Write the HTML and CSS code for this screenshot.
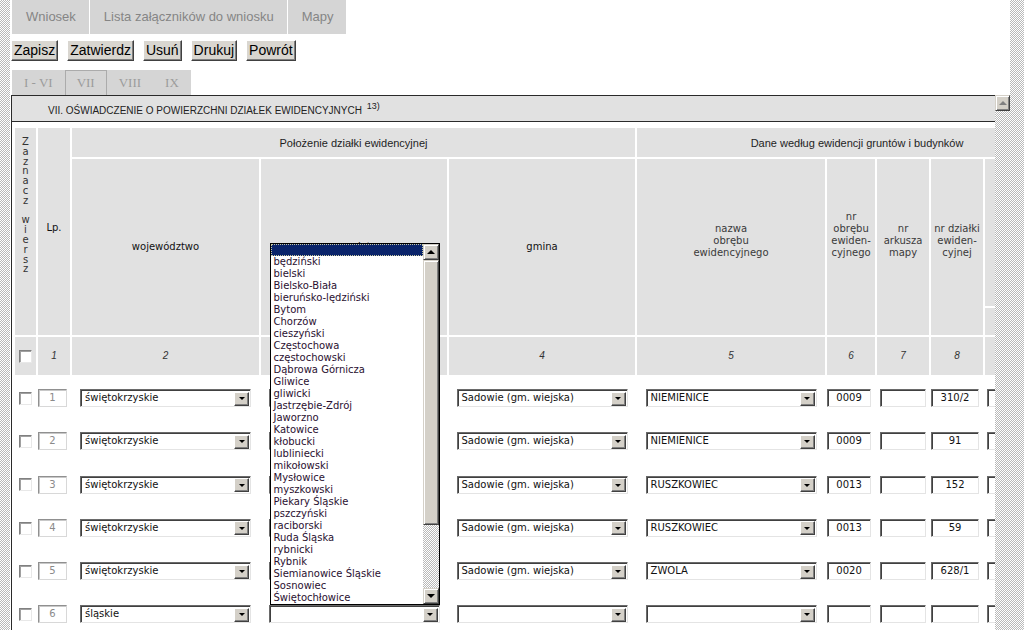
FILE: index.html
```html
<!DOCTYPE html>
<html lang="pl">
<head>
<meta charset="utf-8">
<title>Wniosek</title>
<link rel="stylesheet" href="styles.css">
</head>
<body>
<div class="dither frame-left"></div>
<div class="main">
  <nav class="tabs">
    <div class="tab">Wniosek</div>
    <div class="tab">Lista załączników do wniosku</div>
    <div class="tab">Mapy</div>
  </nav>
  <div class="actions">
    <button class="btn">Zapisz</button>
    <button class="btn">Zatwierdz</button>
    <button class="btn">Usuń</button>
    <button class="btn">Drukuj</button>
    <button class="btn">Powrót</button>
  </div>
  <div class="subtabs">
    <div class="subtab">I - VI</div>
    <div class="subtab active">VII</div>
    <div class="subtab">VIII</div>
    <div class="subtab">IX</div>
  </div>
  <div class="panel">
    <div class="pane">
      <div class="pane-title">VII. OŚWIADCZENIE O POWIERZCHNI DZIAŁEK EWIDENCYJNYCH <sup>13)</sup></div>
      <table class="grid">
        <colgroup>
          <col class="w-chk"><col class="w-lp"><col class="w-woj"><col class="w-pow"><col class="w-gm"><col class="w-obr"><col class="w-nro"><col class="w-ark"><col class="w-dz"><col class="w-last">
        </colgroup>
        <thead>
          <tr class="h1">
            <th rowspan="3" class="hv vert">Z<br>a<br>z<br>n<br>a<br>c<br>z<br><br>w<br>i<br>e<br>r<br>s<br>z</th>
            <th rowspan="3" class="hv lp-h">Lp.</th>
            <th colspan="3" class="ha">Położenie działki ewidencyjnej</th>
            <th colspan="5" class="ha">Dane według ewidencji gruntów i budynków</th>
          </tr>
          <tr class="h2a">
            <th rowspan="2" class="hv dark">województwo</th>
            <th rowspan="2" class="hv dark">powiat</th>
            <th rowspan="2" class="hv dark">gmina</th>
            <th rowspan="2" class="hv pb12">nazwa<br>obrębu<br>ewidencyjnego</th>
            <th rowspan="2" class="hv pb24">nr<br>obrębu<br>ewiden-<br>cyjnego</th>
            <th rowspan="2" class="hv pb12">nr<br>arkusza<br>mapy</th>
            <th rowspan="2" class="hv pb12">nr działki<br>ewiden-<br>cyjnej</th>
            <th class="hv"></th>
          </tr>
          <tr class="h2b">
            <th class="hv"></th>
          </tr>
          <tr class="h3">
            <th><span class="chk"></span></th>
            <th class="num">1</th>
            <th class="num">2</th>
            <th class="num">3</th>
            <th class="num">4</th>
            <th class="num">5</th>
            <th class="num">6</th>
            <th class="num">7</th>
            <th class="num">8</th>
            <th class="num"></th>
          </tr>
        </thead>
        <tbody>
          <tr class="row">
            <td class="c"><span class="chk"></span></td>
            <td><span class="lp">1</span></td>
            <td class="c"><span class="sel"><span class="sel-val">świętokrzyskie</span><span class="abtn"><i class="tri-down"></i></span></span></td>
            <td class="c"><span class="sel"><span class="sel-val">opatowski</span><span class="abtn"><i class="tri-down"></i></span></span></td>
            <td class="c"><span class="sel"><span class="sel-val">Sadowie (gm. wiejska)</span><span class="abtn"><i class="tri-down"></i></span></span></td>
            <td class="c"><span class="sel"><span class="sel-val">NIEMIENICE</span><span class="abtn"><i class="tri-down"></i></span></span></td>
            <td><span class="txt w44">0009</span></td>
            <td class="c"><span class="txt w46"></span></td>
            <td><span class="txt w48">310/2</span></td>
            <td><span class="txt w46 ml2"></span></td>
          </tr>
          <tr class="row">
            <td class="c"><span class="chk"></span></td>
            <td><span class="lp">2</span></td>
            <td class="c"><span class="sel"><span class="sel-val">świętokrzyskie</span><span class="abtn"><i class="tri-down"></i></span></span></td>
            <td class="c"><span class="sel"><span class="sel-val">opatowski</span><span class="abtn"><i class="tri-down"></i></span></span></td>
            <td class="c"><span class="sel"><span class="sel-val">Sadowie (gm. wiejska)</span><span class="abtn"><i class="tri-down"></i></span></span></td>
            <td class="c"><span class="sel"><span class="sel-val">NIEMIENICE</span><span class="abtn"><i class="tri-down"></i></span></span></td>
            <td><span class="txt w44">0009</span></td>
            <td class="c"><span class="txt w46"></span></td>
            <td><span class="txt w48">91</span></td>
            <td><span class="txt w46 ml2"></span></td>
          </tr>
          <tr class="row">
            <td class="c"><span class="chk"></span></td>
            <td><span class="lp">3</span></td>
            <td class="c"><span class="sel"><span class="sel-val">świętokrzyskie</span><span class="abtn"><i class="tri-down"></i></span></span></td>
            <td class="c"><span class="sel"><span class="sel-val">opatowski</span><span class="abtn"><i class="tri-down"></i></span></span></td>
            <td class="c"><span class="sel"><span class="sel-val">Sadowie (gm. wiejska)</span><span class="abtn"><i class="tri-down"></i></span></span></td>
            <td class="c"><span class="sel"><span class="sel-val">RUSZKOWIEC</span><span class="abtn"><i class="tri-down"></i></span></span></td>
            <td><span class="txt w44">0013</span></td>
            <td class="c"><span class="txt w46"></span></td>
            <td><span class="txt w48">152</span></td>
            <td><span class="txt w46 ml2"></span></td>
          </tr>
          <tr class="row">
            <td class="c"><span class="chk"></span></td>
            <td><span class="lp">4</span></td>
            <td class="c"><span class="sel"><span class="sel-val">świętokrzyskie</span><span class="abtn"><i class="tri-down"></i></span></span></td>
            <td class="c"><span class="sel"><span class="sel-val">opatowski</span><span class="abtn"><i class="tri-down"></i></span></span></td>
            <td class="c"><span class="sel"><span class="sel-val">Sadowie (gm. wiejska)</span><span class="abtn"><i class="tri-down"></i></span></span></td>
            <td class="c"><span class="sel"><span class="sel-val">RUSZKOWIEC</span><span class="abtn"><i class="tri-down"></i></span></span></td>
            <td><span class="txt w44">0013</span></td>
            <td class="c"><span class="txt w46"></span></td>
            <td><span class="txt w48">59</span></td>
            <td><span class="txt w46 ml2"></span></td>
          </tr>
          <tr class="row">
            <td class="c"><span class="chk"></span></td>
            <td><span class="lp">5</span></td>
            <td class="c"><span class="sel"><span class="sel-val">świętokrzyskie</span><span class="abtn"><i class="tri-down"></i></span></span></td>
            <td class="c"><span class="sel"><span class="sel-val">opatowski</span><span class="abtn"><i class="tri-down"></i></span></span></td>
            <td class="c"><span class="sel"><span class="sel-val">Sadowie (gm. wiejska)</span><span class="abtn"><i class="tri-down"></i></span></span></td>
            <td class="c"><span class="sel"><span class="sel-val">ZWOLA</span><span class="abtn"><i class="tri-down"></i></span></span></td>
            <td><span class="txt w44">0020</span></td>
            <td class="c"><span class="txt w46"></span></td>
            <td><span class="txt w48">628/1</span></td>
            <td><span class="txt w46 ml2"></span></td>
          </tr>
          <tr class="row">
            <td class="c"><span class="chk"></span></td>
            <td><span class="lp">6</span></td>
            <td class="c"><span class="sel"><span class="sel-val">śląskie</span><span class="abtn"><i class="tri-down"></i></span></span></td>
            <td class="c">
              <span class="dd-wrap">
                <span class="sel"><span class="sel-val"></span><span class="abtn"><i class="tri-down"></i></span></span>
                <span class="dropdown">
                  <span class="dd-list">
                    <span class="dd-item selected"></span>
                    <span class="dd-item">będziński</span>
                    <span class="dd-item">bielski</span>
                    <span class="dd-item">Bielsko-Biała</span>
                    <span class="dd-item">bieruńsko-lędziński</span>
                    <span class="dd-item">Bytom</span>
                    <span class="dd-item">Chorzów</span>
                    <span class="dd-item">cieszyński</span>
                    <span class="dd-item">Częstochowa</span>
                    <span class="dd-item">częstochowski</span>
                    <span class="dd-item">Dąbrowa Górnicza</span>
                    <span class="dd-item">Gliwice</span>
                    <span class="dd-item">gliwicki</span>
                    <span class="dd-item">Jastrzębie-Zdrój</span>
                    <span class="dd-item">Jaworzno</span>
                    <span class="dd-item">Katowice</span>
                    <span class="dd-item">kłobucki</span>
                    <span class="dd-item">lubliniecki</span>
                    <span class="dd-item">mikołowski</span>
                    <span class="dd-item">Mysłowice</span>
                    <span class="dd-item">myszkowski</span>
                    <span class="dd-item">Piekary Śląskie</span>
                    <span class="dd-item">pszczyński</span>
                    <span class="dd-item">raciborski</span>
                    <span class="dd-item">Ruda Śląska</span>
                    <span class="dd-item">rybnicki</span>
                    <span class="dd-item">Rybnik</span>
                    <span class="dd-item">Siemianowice Śląskie</span>
                    <span class="dd-item">Sosnowiec</span>
                    <span class="dd-item">Świętochłowice</span>
                  </span>
                  <span class="dd-scroll">
                    <span class="sbtn"><i class="tri-up"></i></span>
                    <span class="thumb"></span>
                    <span class="dither dd-track"></span>
                    <span class="sbtn"><i class="tri-down"></i></span>
                  </span>
                </span>
              </span>
            </td>
            <td class="c"><span class="sel"><span class="sel-val"></span><span class="abtn"><i class="tri-down"></i></span></span></td>
            <td class="c"><span class="sel"><span class="sel-val"></span><span class="abtn"><i class="tri-down"></i></span></span></td>
            <td><span class="txt w44"></span></td>
            <td class="c"><span class="txt w46"></span></td>
            <td><span class="txt w48"></span></td>
            <td><span class="txt w46 ml2"></span></td>
          </tr>
        </tbody>
      </table>
    </div>
    <div class="vscroll">
      <span class="sbtn pane-up"><i class="tri-up grey"></i></span>
      <span class="dither vtrack"></span>
    </div>
  </div>
</div>
<div class="dither frame-right"></div>
</body>
</html>
```

FILE: styles.css
```css
* { box-sizing: border-box; }

html, body {
  margin: 0;
  height: 630px;
  overflow: hidden;
}

body {
  display: flex;
  background: #fff;
  font-family: "Liberation Sans", Arial, sans-serif;
}

.dither {
  background-color: #dcdcdc;
  background-image: conic-gradient(#b9b9b9 0 25%, #fff 0 50%, #b9b9b9 0 75%, #fff 0);
  background-size: 2px 2px;
}

.frame-left { width: 10px; flex: none; }
.frame-right { width: 14px; flex: none; }

.main {
  flex: 1;
  min-width: 0;
  display: flex;
  flex-direction: column;
  padding-left: 1px;
}

/* top tabs */
.tabs {
  display: flex;
  gap: 1px;
  height: 34px;
  margin-left: 1px;
  flex: none;
}

.tab {
  background: #d5d5d5;
  color: #858585;
  font-size: 13px;
  line-height: 34px;
  padding: 0 13px 0 14px;
}

/* action buttons */
.actions {
  display: flex;
  gap: 9px;
  margin-top: 6px;
  height: 21px;
  flex: none;
}

.btn {
  font: 14px/17px "Liberation Sans", Arial, sans-serif;
  color: #000;
  background: #d9d6d0;
  border: 1px solid;
  border-color: #fff #404040 #404040 #fff;
  box-shadow: inset -1px -1px 0 #808080;
  padding: 1px 2px;
  margin: 0;
  height: 21px;
}

/* roman sub tabs */
.subtabs {
  display: flex;
  margin: 9px 0 0 1px;
  height: 25px;
  align-self: flex-start;
  background: #d5d5d5;
  flex: none;
}

.subtab {
  font: 13px/25px "Liberation Serif", "Times New Roman", serif;
  color: #9c9c9c;
  padding: 0 12px;
}

.subtab.active {
  box-shadow: inset 1px 1px 0 #ababab, inset -1px 0 0 #ababab;
}

/* panel */
.panel {
  flex: 1;
  min-height: 0;
  display: flex;
}

.pane {
  flex: 1;
  min-width: 0;
  overflow: hidden;
  border-top: 1px solid #2a2a2a;
  border-left: 1px solid #2a2a2a;
}

.pane-title {
  height: 26px;
  background: #e1e1e1;
  border-bottom: 1px solid #2a2a2a;
  font-size: 10px;
  line-height: 14px;
  color: #222;
  padding: 8px 0 0 36px;
  white-space: nowrap;
}

.pane-title sup {
  font-size: 9px;
  line-height: 0;
  vertical-align: 5px;
  margin-left: 2px;
}

.vscroll {
  width: 15px;
  flex: none;
  display: flex;
  flex-direction: column;
}

.vtrack { flex: 1; }

/* grid table */
.grid {
  border-collapse: separate;
  border-spacing: 2px;
  table-layout: fixed;
  width: 1066px;
  margin: 4px 0 0 1px;
}

.w-chk { width: 21px; }
.w-lp { width: 32px; }
.w-woj { width: 187px; }
.w-pow { width: 186px; }
.w-gm { width: 186px; }
.w-obr { width: 188px; }
.w-nro { width: 48px; }
.w-ark { width: 52px; }
.w-dz { width: 52px; }
.w-last { width: 92px; }

.grid th {
  background: #e1e1e1;
  padding: 0;
  font-weight: normal;
  text-align: center;
  vertical-align: middle;
}

.grid td {
  padding: 0;
  vertical-align: middle;
  text-align: left;
}

.grid td.c { text-align: center; }

.h1 { height: 29px; }
.h2a { height: 147px; }
.h2b { height: 27px; }
.h3 { height: 38px; }
.row { height: 41.25px; }

.ha {
  font: 11px/14px "Liberation Sans", Arial, sans-serif;
  color: #1e1e1e;
}

.hv {
  font: 10px/12px "DejaVu Sans", Verdana, sans-serif;
  color: #3a3a3a;
}

.hv.dark { color: #111; }

.grid th.vert {
  vertical-align: top;
  padding-top: 9px;
  line-height: 9.8px;
  color: #333;
}

.grid th.lp-h { padding-bottom: 8px; color: #111; }
.grid th.pb12 { padding-bottom: 12px; }
.grid th.pb24 { padding-bottom: 24px; }

.num {
  font: italic 10px/12px "Liberation Sans", Arial, sans-serif;
  color: #333;
}

/* form controls */
.chk {
  display: inline-block;
  width: 13px;
  height: 13px;
  background: #fff;
  border: 1px solid;
  border-color: #808080 #e8e8e8 #e8e8e8 #808080;
  box-shadow: inset 1px 1px 0 #a0a0a0;
  vertical-align: middle;
}

.lp {
  display: inline-block;
  width: 29px;
  height: 18px;
  border: 1px solid;
  border-color: #909090 #d8d8d8 #d8d8d8 #909090;
  box-shadow: inset 1px 1px 0 #c8c8c8;
  font: 10px/16px "DejaVu Sans", Verdana, sans-serif;
  color: #8a8a8a;
  text-align: center;
  vertical-align: middle;
}

.sel {
  display: inline-flex;
  align-items: center;
  width: 171px;
  height: 18px;
  background: #fff;
  border: 1px solid;
  border-color: #6a6a6a #e4e4e4 #e4e4e4 #6a6a6a;
  box-shadow: inset 1px 1px 0 #404040;
  vertical-align: middle;
  text-align: left;
}

.sel-val {
  flex: 1;
  min-width: 0;
  padding-left: 4px;
  font: 10px/16px "DejaVu Sans", Verdana, sans-serif;
  color: #111;
  white-space: nowrap;
  overflow: hidden;
}

.abtn {
  flex: none;
  width: 15px;
  height: 14px;
  margin: 1px 1px 0 0;
  display: flex;
  align-items: center;
  justify-content: center;
  background: #d4d0c8;
  border: 1px solid;
  border-color: #fff #404040 #404040 #fff;
  box-shadow: inset -1px -1px 0 #808080;
}

.txt {
  display: inline-block;
  height: 18px;
  border: 1px solid;
  border-color: #6a6a6a #e4e4e4 #e4e4e4 #6a6a6a;
  box-shadow: inset 1px 1px 0 #404040;
  font: 10px/16px "DejaVu Sans", Verdana, sans-serif;
  color: #111;
  text-align: center;
  vertical-align: middle;
}

.w44 { width: 44px; }
.w46 { width: 46px; }
.w48 { width: 48px; }
.ml2 { margin-left: 2px; }

/* triangles */
.tri-down, .tri-up {
  display: block;
  width: 0;
  height: 0;
  border-left: 3px solid transparent;
  border-right: 3px solid transparent;
}

.tri-down { border-top: 3px solid #000; }
.tri-up { border-bottom: 4px solid #000; border-left-width: 4px; border-right-width: 4px; }
.tri-up.grey { border-bottom-color: #808080; }

.sbtn {
  flex: none;
  width: 16px;
  height: 16px;
  display: flex;
  align-items: center;
  justify-content: center;
  background: #d4d0c8;
  border: 1px solid;
  border-color: #d4d0c8 #404040 #404040 #d4d0c8;
  box-shadow: inset 1px 1px 0 #fff, inset -1px -1px 0 #808080;
}

.sbtn .tri-down {
  border-left-width: 4px;
  border-right-width: 4px;
  border-top-width: 4px;
}

.pane-up { width: 15px; height: 16px; }

/* open dropdown list */
.dd-wrap {
  position: relative;
  display: inline-block;
  vertical-align: middle;
}

.dropdown {
  position: absolute;
  left: 1px;
  bottom: 100%;
  width: 170px;
  height: 362px;
  display: flex;
  background: #fff;
  border: 1px solid #000;
  z-index: 2;
}

.dd-list {
  flex: 1;
  min-width: 0;
  display: flex;
  flex-direction: column;
}

.dd-item {
  display: block;
  height: 12px;
  font: 10px/12px "DejaVu Sans", Verdana, sans-serif;
  color: #2a1030;
  padding-left: 3px;
  white-space: nowrap;
  text-align: left;
}

.dd-item.selected {
  background: #0a246a;
  outline: 1px dotted #c8c8a0;
  outline-offset: -1px;
}

.dd-scroll {
  width: 16px;
  flex: none;
  display: flex;
  flex-direction: column;
}

.thumb {
  flex: none;
  height: 265px;
  background: #d4d0c8;
  border: 1px solid;
  border-color: #d4d0c8 #404040 #404040 #d4d0c8;
  box-shadow: inset 1px 1px 0 #fff, inset -1px -1px 0 #808080;
}

.dd-track { flex: 1; }
```
